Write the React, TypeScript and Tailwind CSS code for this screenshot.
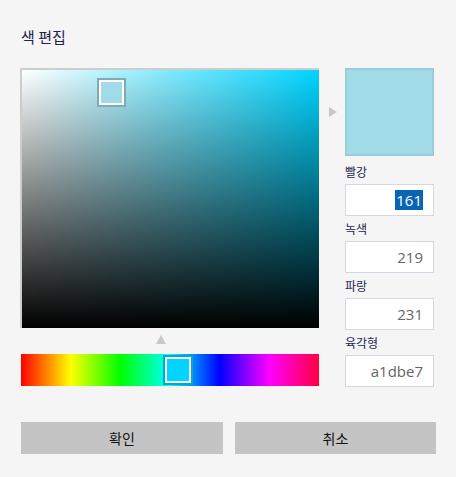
import { useState } from 'react';

// Color editor dialog: saturation/value square, hue strip, RGB/hex fields
const fields = [
  { label: '빨강', value: '161', selected: true },
  { label: '녹색', value: '219' },
  { label: '파랑', value: '231' },
  { label: '육각형', value: 'a1dbe7' },
];

export default function App() {
  const [color] = useState('#a1dbe7');

  return (
    <div className="w-[456px] h-[477px] bg-[#f5f5f5] pl-[20px] pt-[27px] font-['Noto_Sans_CJK_KR',sans-serif]">
      {/* Title */}
      <h1 className="text-[15px] leading-[20px] text-[#1f1f50] pl-[1px]">색 편집</h1>

      <div className="flex mt-[21px]">
        {/* Left: SV square + hue slider */}
        <div className="w-[299px] flex flex-col">
          <div className="relative h-[260px] border-l-2 border-t-2 border-[#cdcdcd] bg-[linear-gradient(to_bottom,transparent,#000),linear-gradient(to_right,#fff,#00d4ff)]">
            <div className="absolute left-[75px] top-[8px] w-[29px] h-[29px] border-2 border-[#7faab6] bg-white p-[2px]">
              <div className="w-full h-full" style={{ backgroundColor: color }} />
            </div>
          </div>

          <div className="ml-[136px] mt-[7px] w-0 h-0 border-l-[5px] border-r-[5px] border-b-[9px] border-l-transparent border-r-transparent border-b-[#c8c8c8]" />

          <div className="relative mt-[10px] ml-[1px] w-[298px] h-[32px] bg-[linear-gradient(to_right,#ff0000,#ffff00,#00ff00,#00ffff,#0000ff,#ff00ff,#ff0040)]">
            <div className="absolute left-[142px] top-[1px] w-[30px] h-[30px] border-2 border-[#00a6d6] bg-white p-[2px]">
              <div className="w-full h-full bg-[#00d4ff]" />
            </div>
          </div>
        </div>

        {/* Pointer */}
        <div className="w-[26px] flex items-start">
          <div className="ml-[10px] mt-[39px] w-0 h-0 border-t-[5px] border-b-[5px] border-l-[8px] border-t-transparent border-b-transparent border-l-[#c8c8c8]" />
        </div>

        {/* Right: preview + fields */}
        <div className="w-[89px] flex flex-col">
          <div className="h-[88px] border-2 border-[#9acbd6]" style={{ backgroundColor: color }} />
          {fields.map((f, i) => (
            <div key={f.label} className={i === 0 ? 'mt-[8px]' : 'mt-[5px]'}>
              <div className="text-[12px] leading-[16px] text-[#1f1f50] mb-[4px]">{f.label}</div>
              <div className="h-[32px] bg-white border border-[#d5d8e2] flex items-center justify-end pr-[10px] text-[15px] text-[#666] font-['Open_Sans','Noto_Sans',sans-serif]">
                {f.selected ? (
                  <span className="bg-[#0a64b4] text-white leading-[20px] px-[1px]">{f.value}</span>
                ) : (
                  f.value
                )}
              </div>
            </div>
          ))}
        </div>
      </div>

      {/* Buttons */}
      <div className="flex gap-[12px] mt-[35px] ml-[1px]">
        <button className="w-[202px] h-[32px] bg-[#c4c4c4] text-[14px] text-[#111]">확인</button>
        <button className="w-[201px] h-[32px] bg-[#c4c4c4] text-[14px] text-[#111]">취소</button>
      </div>
    </div>
  );
}
